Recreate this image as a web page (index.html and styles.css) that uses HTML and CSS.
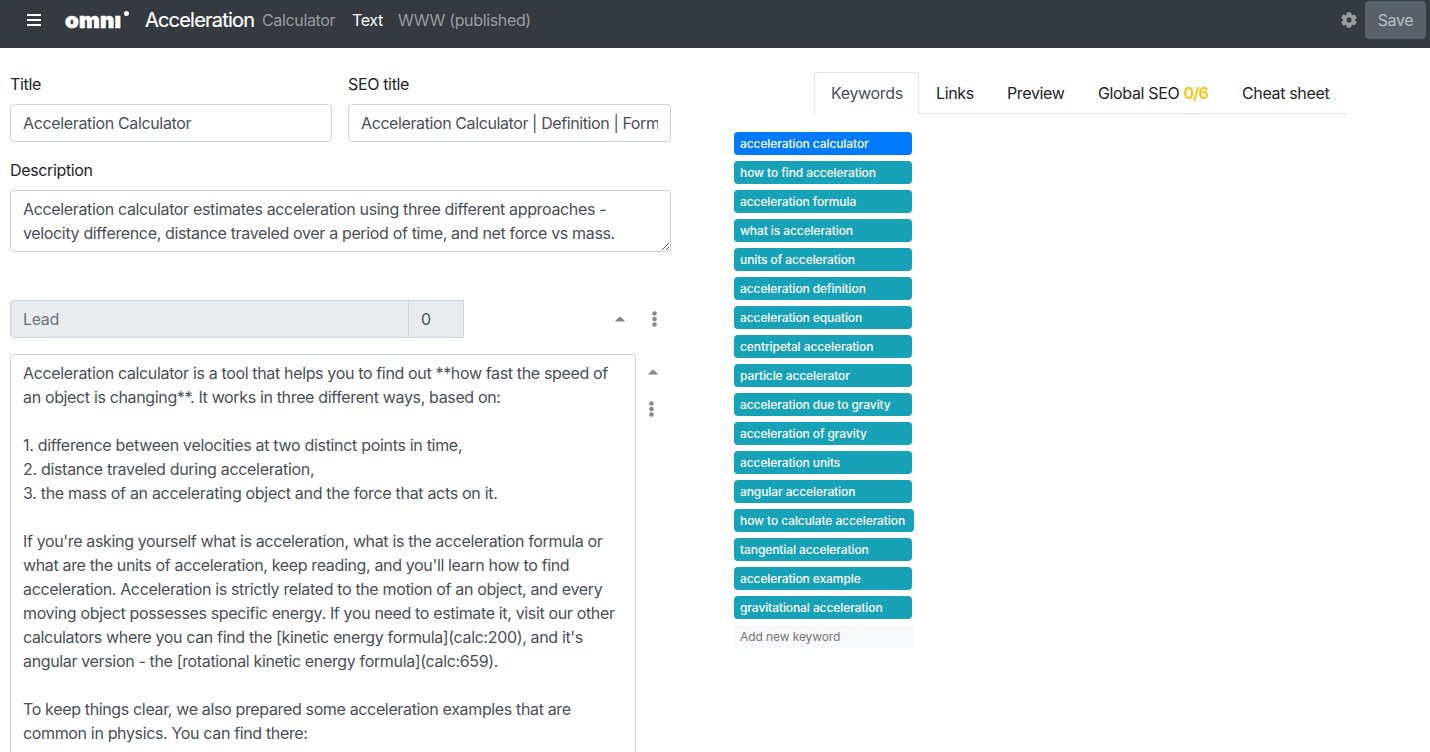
FILE: index.html
```html
<!DOCTYPE html>
<html lang="en">
<head>
<meta charset="utf-8">
<title>Acceleration Calculator</title>
<link rel="stylesheet" href="styles.css">
</head>
<body>
<nav class="navbar">
  <svg class="menu-icon" width="14" height="12" viewBox="0 0 14 12"><path d="M0 1h14M0 6h14M0 11h14" stroke="#fff" stroke-width="2"/></svg>
  <span class="logo">omnı<i class="logo-dot"></i></span>
  <span class="brand">Acceleration</span>
  <a class="nav-link nav-calc">Calculator</a>
  <a class="nav-link nav-text active">Text</a>
  <a class="nav-link nav-www">WWW (published)</a>
  <svg class="gear" width="16" height="16" viewBox="0 0 24 24"><path fill="#9a9da0" stroke="#9a9da0" stroke-width="1" stroke-linejoin="round" fill-rule="evenodd" d="M9.2 1h5.6l.6 3.2 1.9 1.1 3.1-1.1 2.8 4.8-2.5 2.1v1.8l2.5 2.1-2.8 4.8-3.1-1.1-1.9 1.1-.6 3.2H9.200l-.6-3.200-1.900-1.100-3.100 1.100L.8 15l2.500-2.100v-1.800L.8 9l2.800-4.800 3.100 1.100 1.900-1.100zM12 7.500a4.500 4.500 0 1 0 0 9 4.500 4.500 0 0 0 0-9z"/></svg>
  <button class="save">Save</button>
</nav>
<main class="page">
  <section class="editor">
    <div class="titles">
      <div class="field"><label class="label">Title</label><div class="input"><span class="clip">Acceleration Calculator</span></div></div>
      <div class="field"><label class="label">SEO title</label><div class="input"><span class="clip seo-title">Acceleration Calculator | Definition | Form</span></div></div>
    </div>
    <label class="label">Description</label>
    <textarea class="description" spellcheck="false">Acceleration calculator estimates acceleration using three different approaches -
velocity difference, distance traveled over a period of time, and net force vs mass.</textarea>
    <div class="section-head">
      <div class="lead">Lead</div><div class="order">0</div>
      <svg class="caret" width="10" height="6" viewBox="0 0 10 6"><path fill="#888" d="M.3 4.700 4.300.9q.7-.6 1.400 0l4 3.800q.5.800-.4.800H.7q-.9 0-.4-.8z"/></svg>
      <svg class="dots" width="5" height="16" viewBox="0 0 5 16"><g fill="#888"><circle cx="2.500" cy="2.500" r="2.300"/><circle cx="2.500" cy="8" r="2.300"/><circle cx="2.500" cy="13.500" r="2.300"/></g></svg>
    </div>
    <div class="block">
      <div class="body-text">Acceleration calculator is a tool that helps you to find out **how fast the speed of
an object is changing**. It works in three different ways, based on:

<span class="list">1. difference between velocities at two distinct points in time,
2. distance traveled during acceleration,
3. the mass of an accelerating object and the force that acts on it.</span>

If you're asking yourself what is acceleration, what is the acceleration formula or
what are the units of acceleration, keep reading, and you'll learn how to find
acceleration. Acceleration is strictly related to the motion of an object, and every
moving object possesses specific energy. If you need to estimate it, visit our other
calculators where you can find the [kinetic energy formula](calc:200), and it's
angular version - the [rotational kinetic energy formula](calc:659).

To keep things clear, we also prepared some acceleration examples that are
common in physics. You can find there:</div>
      <div class="block-tools">
        <svg width="10" height="6" viewBox="0 0 10 6"><path fill="#888" d="M.3 4.700 4.300.9q.7-.6 1.400 0l4 3.800q.5.800-.4.800H.7q-.9 0-.4-.8z"/></svg>
        <svg class="block-dots" width="5" height="16" viewBox="0 0 5 16"><g fill="#888"><circle cx="2.500" cy="2.500" r="2.300"/><circle cx="2.500" cy="8" r="2.300"/><circle cx="2.500" cy="13.500" r="2.300"/></g></svg>
      </div>
    </div>
  </section>
  <aside class="side">
    <div class="tabs">
      <a class="tab selected">Keywords</a><a class="tab t-links">Links</a><a class="tab t-preview">Preview</a><a class="tab t-seo">Global SEO <b class="score">0/6</b></a><a class="tab t-cheat">Cheat sheet</a>
    </div>
    <div class="keywords">
      <span class="kw primary">acceleration calculator</span>
      <span class="kw">how to find acceleration</span>
      <span class="kw">acceleration formula</span>
      <span class="kw">what is acceleration</span>
      <span class="kw">units of acceleration</span>
      <span class="kw">acceleration definition</span>
      <span class="kw">acceleration equation</span>
      <span class="kw">centripetal acceleration</span>
      <span class="kw">particle accelerator</span>
      <span class="kw">acceleration due to gravity</span>
      <span class="kw">acceleration of gravity</span>
      <span class="kw">acceleration units</span>
      <span class="kw">angular acceleration</span>
      <span class="kw wide">how to calculate acceleration</span>
      <span class="kw">tangential acceleration</span>
      <span class="kw">acceleration example</span>
      <span class="kw">gravitational acceleration</span>
      <span class="kw add">Add new keyword</span>
    </div>
  </aside>
</main>
</body>
</html>
```
FILE: styles.css
```css
* { box-sizing: border-box; }
body { margin: 0; height: 752px; overflow: hidden; background: #fff; color: #212529; font: 16px/24px Inter, "Liberation Sans", sans-serif; letter-spacing: -0.35px; }
.navbar { display: flex; align-items: center; height: 48px; padding: 0 4px 8px 27px; background: #343a40; color: #fff; white-space: nowrap; }
.menu-icon { margin-right: 24px; }
.logo { position: relative; width: 66px; margin-right: 14px; font-weight: 900; font-size: 22px; line-height: 40px; letter-spacing: 0.25px; -webkit-text-stroke: 0.6px #fff; }
.logo-dot { position: absolute; left: 59px; top: 11px; width: 5px; height: 5px; border-radius: 50%; background: #fff; }
.brand { width: 117px; font-size: 20px; letter-spacing: -0.8px; -webkit-text-stroke: 0.2px #fff; }
.nav-link { color: #999c9f; }
.nav-calc { width: 90px; }
.nav-text { width: 46px; }
.active { color: #fff; }
.gear { margin-left: auto; margin-right: 8px; }
.save { width: 61px; height: 38px; padding: 0; border: 0; border-radius: 4px; background: #596168; color: #babdc0; font: inherit; letter-spacing: inherit; }
.page { display: flex; height: 704px; }
.editor { display: flex; flex-direction: column; width: 661px; margin-left: 10px; padding-top: 24px; flex: none; }
.titles { display: grid; grid-template-columns: 322px 323px; gap: 16px; margin-bottom: 16px; }
.label { display: block; margin-bottom: 8px; }
.input { height: 38px; padding: 6px 12px; border: 1px solid #ced4da; border-radius: 4px; color: #495057; }
.clip { display: block; overflow: hidden; white-space: nowrap; }
.seo-title { letter-spacing: -0.4px; }
.description { display: block; width: 661px; height: 62px; padding: 6px 12px; overflow: hidden; border: 1px solid #ced4da; border-radius: 4px; color: #495057; font: inherit; letter-spacing: inherit; white-space: pre; resize: vertical; outline: none; }
.section-head { display: flex; align-items: center; height: 38px; margin: 48px 0 16px; color: #495057; }
.lead, .order { height: 38px; padding: 6px 12px; border: 1px solid #ced4da; background: #e9ecef; }
.lead { width: 399px; border-radius: 4px 0 0 4px; color: #6c757d; }
.order { width: 56px; margin-left: -1px; }
.caret { margin-left: 151px; }
.dots { margin-left: 27px; }
.block { display: flex; flex: 1; }
.body-text { width: 626px; padding: 6px 12px 0; border: 1px solid #ced4da; border-bottom: 0; border-radius: 4px 4px 0 0; color: #495057; white-space: pre; }
.list { letter-spacing: -0.31px; }
.block-tools { display: flex; flex-direction: column; align-items: center; margin-left: 11px; padding-top: 15px; width: 12px; }
.block-dots { margin-top: 26px; margin-right: 3px; }
.side { margin-left: 63px; padding-top: 24px; }
.tabs { display: flex; width: 533px; height: 42px; margin-left: 80px; white-space: nowrap; border-bottom: 1px solid #dee2e6; }
.tab { padding: 9px 0 0 17px; }
.selected { width: 105px; height: 42px; padding: 8px 0 0 16px; background: #fff; border: 1px solid #dee2e6; border-bottom: 0; border-radius: 4px 4px 0 0; color: #495057; }
.t-links { width: 71px; }
.t-preview { width: 91px; }
.t-seo { width: 144px; }
.score { color: #ffc107; font-weight: 600; letter-spacing: -0.8px; }
.keywords { display: flex; flex-direction: column; gap: 6px; margin-top: 18px; }
.kw { width: 178px; height: 23px; padding: 0 6px; border-radius: 4px; background: #17a2b8; color: #fff; font-size: 12px; font-weight: 500; line-height: 23px; letter-spacing: -0.09px; white-space: nowrap; }
.primary { background: #007bff; }
.wide { width: 180px; }
.add { width: 179px; background: #f8f9fa; color: #757575; font-weight: 400; }
```
